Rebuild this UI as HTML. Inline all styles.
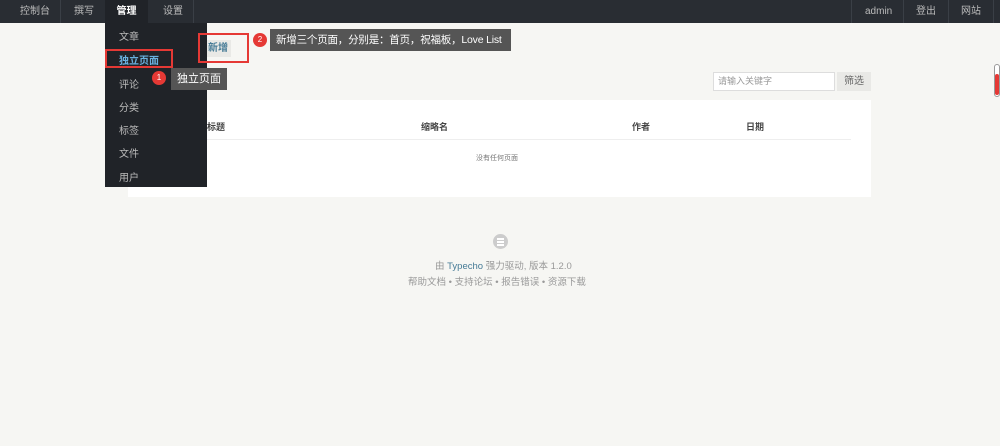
<!DOCTYPE html><html><head><meta charset="utf-8"><style>
body{margin:0;width:1000px;height:446px;background:#f6f6f3;font-family:"Liberation Sans","Noto Sans CJK SC",sans-serif;position:relative;overflow:hidden;font-size:10px;color:#444}
.a{position:absolute;white-space:nowrap}
.nav{position:absolute;left:0;top:0;width:1000px;height:23px;background:#292d33;z-index:5}
.n{position:absolute;top:0;height:23px;line-height:23px;color:#bbb;font-size:10px}
.sep{position:absolute;top:0;width:1px;height:23px;background:#3a3f46}
.dd{position:absolute;left:105px;top:23px;width:102px;height:164px;background:#202328;z-index:5}
.di{position:absolute;left:14px;color:#bbb;font-size:10px}
.tip{position:absolute;background:#555;color:#fff;font-size:11px;white-space:nowrap;z-index:6}
.badge{position:absolute;width:14px;height:14px;border-radius:7px;background:#e53935;color:#fff;font-size:8px;text-align:center;line-height:14px;z-index:6}
</style></head><body>
<div class="nav">
<div class="n" style="left:20px">控制台</div><div class="sep" style="left:60px"></div>
<div class="n" style="left:74px">撰写</div><div class="sep" style="left:105px"></div>
<div class="n" style="left:105px;width:43px;background:#202328;text-align:center;color:#fff;font-weight:bold">管理</div>
<div class="n" style="left:163px">设置</div><div class="sep" style="left:193px"></div>
<div class="sep" style="left:851px"></div><div class="n" style="left:865px">admin</div>
<div class="sep" style="left:903px"></div><div class="n" style="left:916px">登出</div>
<div class="sep" style="left:948px"></div><div class="n" style="left:961px">网站</div>
<div class="sep" style="left:993px"></div>
</div>
<div class="a" style="left:128px;top:100px;width:743px;height:97px;background:#fff"></div>
<div class="dd">
<div class="di" style="top:5px">文章</div>
<div class="di" style="top:29px;color:#6ab0de;font-weight:bold">独立页面</div>
<div class="di" style="top:53px">评论</div>
<div class="di" style="top:76px">分类</div>
<div class="di" style="top:99px">标签</div>
<div class="di" style="top:122px">文件</div>
<div class="di" style="top:146px">用户</div>
</div>
<div class="a" style="left:105px;top:49px;width:64px;height:15px;border:2px solid #e53935;z-index:6"></div>
<div class="badge" style="left:152px;top:71px">1</div>
<div class="tip" style="left:171px;top:68px;width:56px;height:22px;line-height:22px;text-align:center">独立页面</div>
<div class="a" style="left:205px;top:40px;width:26px;height:17px;background:#e9e9e6;color:#467b96;font-weight:bold;font-size:10px;line-height:17px;text-align:center">新增</div>
<div class="a" style="left:198px;top:33px;width:47px;height:26px;border:2px solid #e53935;z-index:6"></div>
<div class="badge" style="left:253px;top:33px">2</div>
<div class="tip" style="left:270px;top:29px;width:241px;height:22px;line-height:22px;padding-left:6px;box-sizing:border-box;font-size:10.5px;letter-spacing:-0.2px">新增三个页面，分别是：首页，祝福板，Love List</div>
<div class="a" style="left:713px;top:72px;height:17px;background:#fff;border:1px solid #ddd;color:#999;font-size:9px;line-height:17px;padding-left:4px;width:116px">请输入关键字</div>
<div class="a" style="left:837px;top:72px;width:34px;height:19px;background:#e9e9e6;color:#666;font-size:10px;line-height:19px;text-align:center">筛选</div>
<div class="a" style="left:207px;top:120px;font-weight:bold;font-size:9px">标题</div>
<div class="a" style="left:421px;top:120px;font-weight:bold;font-size:9px">缩略名</div>
<div class="a" style="left:632px;top:120px;font-weight:bold;font-size:9px">作者</div>
<div class="a" style="left:746px;top:120px;font-weight:bold;font-size:9px">日期</div>
<div class="a" style="left:128px;top:139px;width:723px;height:1px;background:#eee"></div>
<div class="a" style="left:476px;top:153px;font-size:7px;color:#777">没有任何页面</div>
<div class="a" style="left:493px;top:234px;width:15px;height:15px;border-radius:8px;background:#ccc"></div>
<div class="a" style="left:497px;top:238px;width:7px;height:1.5px;background:#fff;box-shadow:0 3px 0 #fff,0 6px 0 #fff"></div>
<div class="a" style="left:435px;top:258px;font-size:9.5px;color:#999">由 <span style="color:#467b96">Typecho</span> 强力驱动, 版本 1.2.0</div>
<div class="a" style="left:408px;top:274px;font-size:9.5px;color:#999">帮助文档 • 支持论坛 • 报告错误 • 资源下载</div>
<div class="a" style="left:994px;top:64px;width:4px;height:31px;border:1px solid #999;border-radius:3px;background:#fff"></div>
<div class="a" style="left:995px;top:74px;width:4px;height:21px;background:#e53935;border-radius:2px"></div>
</body></html>
